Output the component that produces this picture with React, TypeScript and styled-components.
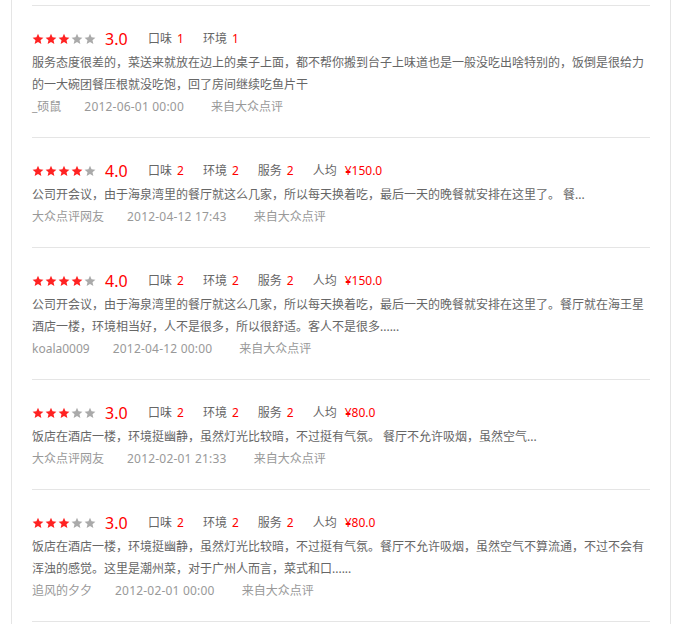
import styled, { createGlobalStyle } from 'styled-components'

const GlobalStyle = createGlobalStyle`
  body {
    margin: 0;
    background: #fff;
    font-family: 'Noto Sans', 'Noto Sans CJK SC', sans-serif;
  }
`

const RED = '#f00'

const Panel = styled.div`
  margin-left: 11px;
  width: 618px;
  padding: 5px 20px 0 20px;
  border-left: 1px solid #e5e5e5;
  border-right: 1px solid #e5e5e5;
  min-height: 619px;
`

const List = styled.ul`
  list-style: none;
  margin: 0;
  padding: 0;
  border-top: 1px solid #e5e5e5;
`

const Item = styled.li`
  padding: 21px 0 19px;
  border-bottom: 1px solid #e5e5e5;
  font-size: 12px;
  line-height: 22px;
`

const ScoreRow = styled.div`
  display: flex;
  align-items: center;
  height: 23px;
  margin-bottom: 2px;
`

const Stars = styled.span`
  display: flex;
  gap: 1px;
  margin-right: 9px;
`

const Rating = styled.span`
  font-size: 16px;
  color: ${RED};
  width: 24px;
  margin-right: 19px;
`

const Score = styled.span<{ $price?: boolean }>`
  color: #666;
  margin-right: 19px;

  em {
    font-style: normal;
    color: ${RED};
    margin-left: ${(p) => (p.$price ? '8px' : '5px')};
  }
`

const Body = styled.p`
  margin: 0;
  color: #666;
`

const Meta = styled.div`
  display: flex;
  color: #999;

  span {
    margin-right: 23px;
  }

  time {
    margin-right: 27px;
    letter-spacing: 0.2px;
  }
`

const Star = ({ on }: { on: boolean }) => (
  <svg width="12" height="12" viewBox="0 0 24 24">
    <path
      d="M12 1.5l3.1 7.1 7.7.7-5.8 5.1 1.7 7.6L12 18l-6.7 4 1.7-7.6-5.8-5.1 7.7-.7z"
      fill={on ? '#f22' : '#aaa'}
    />
  </svg>
)

type Review = {
  stars: number
  scores: [string, string][]
  text: string
  user: string
  time: string
}

const reviews: Review[] = [
  {
    stars: 3,
    scores: [
      ['口味', '1'],
      ['环境', '1'],
    ],
    text: '服务态度很差的，菜送来就放在边上的桌子上面，都不帮你搬到台子上味道也是一般没吃出啥特别的，饭倒是很给力的一大碗团餐压根就没吃饱，回了房间继续吃鱼片干',
    user: '_硕鼠',
    time: '2012-06-01 00:00',
  },
  {
    stars: 4,
    scores: [
      ['口味', '2'],
      ['环境', '2'],
      ['服务', '2'],
      ['人均', '¥150.0'],
    ],
    text: '公司开会议，由于海泉湾里的餐厅就这么几家，所以每天换着吃，最后一天的晚餐就安排在这里了。 餐...',
    user: '大众点评网友',
    time: '2012-04-12 17:43',
  },
  {
    stars: 4,
    scores: [
      ['口味', '2'],
      ['环境', '2'],
      ['服务', '2'],
      ['人均', '¥150.0'],
    ],
    text: '公司开会议，由于海泉湾里的餐厅就这么几家，所以每天换着吃，最后一天的晚餐就安排在这里了。餐厅就在海王星酒店一楼，环境相当好，人不是很多，所以很舒适。客人不是很多......',
    user: 'koala0009',
    time: '2012-04-12 00:00',
  },
  {
    stars: 3,
    scores: [
      ['口味', '2'],
      ['环境', '2'],
      ['服务', '2'],
      ['人均', '¥80.0'],
    ],
    text: '饭店在酒店一楼，环境挺幽静，虽然灯光比较暗，不过挺有气氛。 餐厅不允许吸烟，虽然空气...',
    user: '大众点评网友',
    time: '2012-02-01 21:33',
  },
  {
    stars: 3,
    scores: [
      ['口味', '2'],
      ['环境', '2'],
      ['服务', '2'],
      ['人均', '¥80.0'],
    ],
    text: '饭店在酒店一楼，环境挺幽静，虽然灯光比较暗，不过挺有气氛。餐厅不允许吸烟，虽然空气不算流通，不过不会有浑浊的感觉。这里是潮州菜，对于广州人而言，菜式和口......',
    user: '追风的夕夕',
    time: '2012-02-01 00:00',
  },
]

export default function App() {
  return (
    <Panel>
      <GlobalStyle />
      <List>
        {reviews.map((r, i) => (
          <Item key={i}>
            <ScoreRow>
              <Stars>
                {[0, 1, 2, 3, 4].map((n) => (
                  <Star key={n} on={n < r.stars} />
                ))}
              </Stars>
              <Rating>{r.stars.toFixed(1)}</Rating>
              {r.scores.map(([label, value]) => (
                <Score key={label} $price={value.startsWith('¥')}>
                  {label}
                  <em>{value}</em>
                </Score>
              ))}
            </ScoreRow>
            <Body>{r.text}</Body>
            <Meta>
              <span>{r.user}</span>
              <time>{r.time}</time>
              <span>来自大众点评</span>
            </Meta>
          </Item>
        ))}
      </List>
    </Panel>
  )
}
